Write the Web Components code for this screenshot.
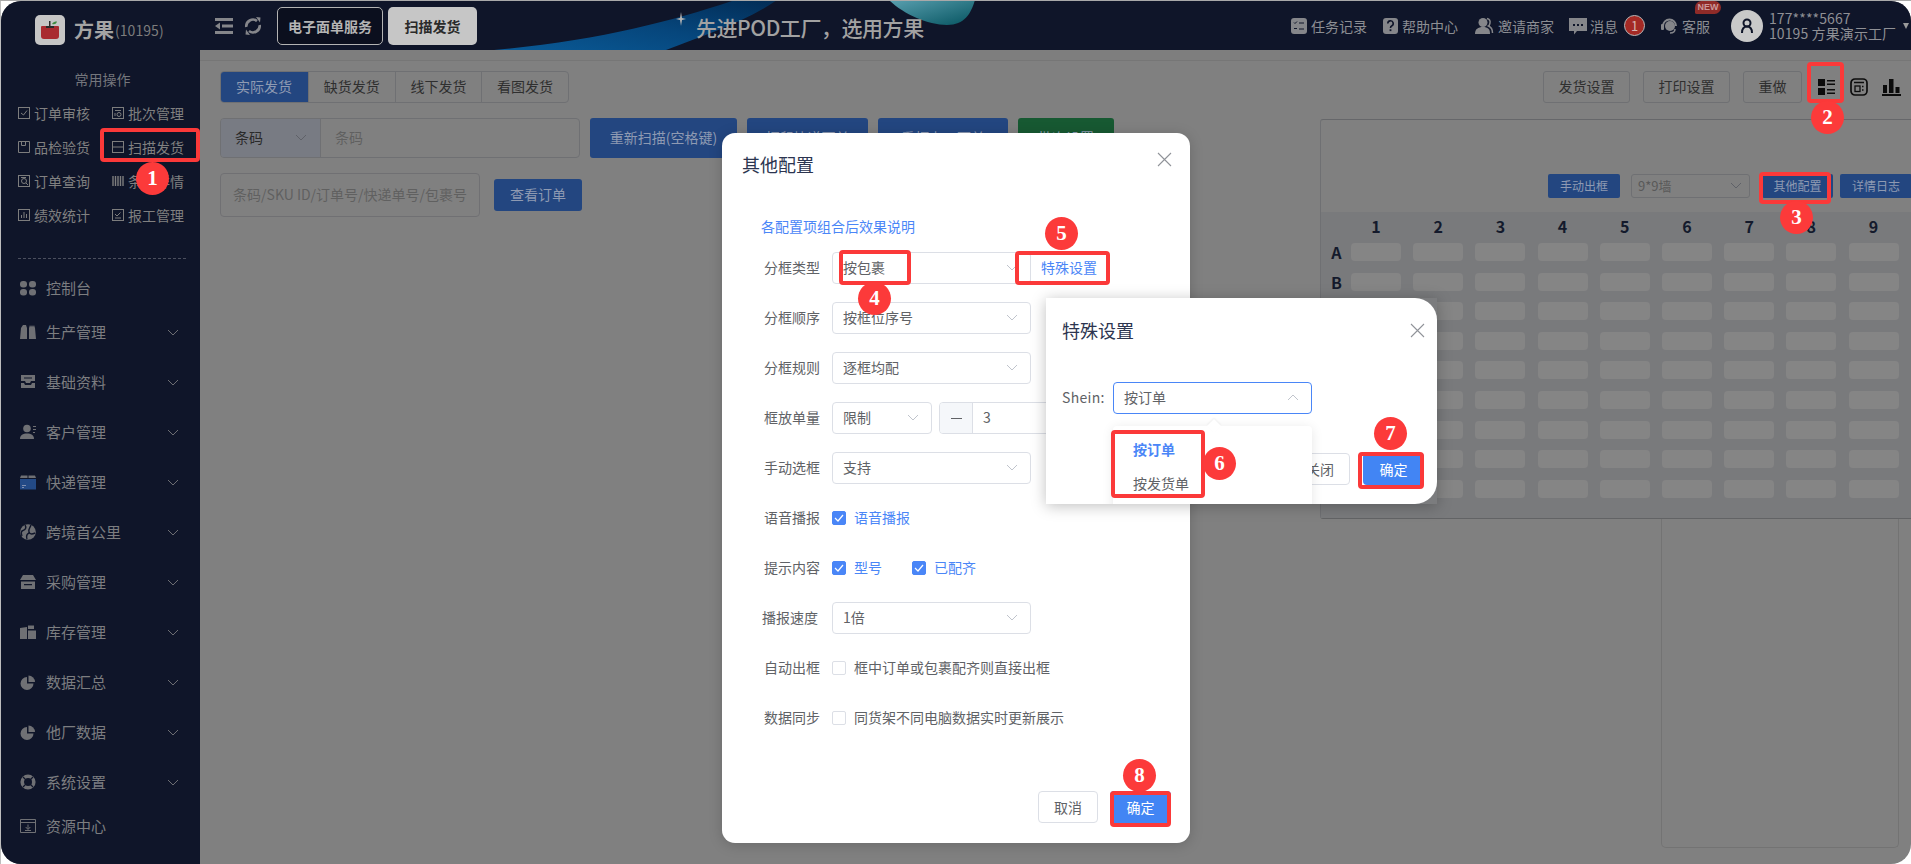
<!DOCTYPE html>
<html lang="zh"><head><meta charset="utf-8"><title>方果</title>
<style>
html,body{margin:0;padding:0;width:1911px;height:864px;overflow:hidden;background:#fff}
body{position:relative;font:14px "Noto Sans CJK SC","Noto Sans",sans-serif}
</style></head><body>
<app-shell>
  <side-bar></side-bar>
  <top-bar></top-bar>
  <ship-page></ship-page>
</app-shell>
<config-dialog></config-dialog>
<special-dialog></special-dialog>
<mark-box style="left:100px;top:128px;width:100px;height:34px"></mark-box>
<mark-box style="left:1807px;top:62px;width:37px;height:41px"></mark-box>
<mark-box style="left:1759px;top:172px;width:72px;height:32px"></mark-box>
<mark-box style="left:839px;top:250px;width:72px;height:35px"></mark-box>
<mark-box style="left:1015px;top:251px;width:95px;height:34px"></mark-box>
<mark-box style="left:1111px;top:430px;width:94px;height:68px"></mark-box>
<mark-box style="left:1358px;top:452px;width:66px;height:37px"></mark-box>
<mark-box style="left:1110px;top:791px;width:61px;height:36px"></mark-box>
<step-dot style="left:136px;top:162px">1</step-dot>
<step-dot style="left:1811px;top:101px">2</step-dot>
<step-dot style="left:1780px;top:201px">3</step-dot>
<step-dot style="left:858px;top:282px">4</step-dot>
<step-dot style="left:1045px;top:217px">5</step-dot>
<step-dot style="left:1203px;top:447px">6</step-dot>
<step-dot style="left:1374px;top:417px">7</step-dot>
<step-dot style="left:1123px;top:759px">8</step-dot>
<script>
const svg=(w,h,vb,body,extra='')=>`<svg width="${w}" height="${h}" viewBox="${vb}" ${extra} style="display:block;flex:none">${body}</svg>`;
const chev=(c='#c0c4cc',up=false)=>svg(12,7,'0 0 12 7',`<path d="${up?'M1 6l5-5 5 5':'M1 1l5 5 5-5'}" fill="none" stroke="${c}" stroke-width="1"/>`);
const BG='#0f1529';
const navIcons={
 dash:'<rect x="0" y="1" width="7" height="6.5" rx="3"/><rect x="9" y="1" width="7" height="6.5" rx="3"/><rect x="0" y="9" width="7" height="6.5" rx="3"/><rect x="9" y="9" width="7" height="6.5" rx="3"/>',
 prod:'<path d="M0 15l1-11 2-3h3l1 3v11zM9 15V4l1-3 1 2 1-2 1 2 1-2 1 3 1 11z"/>',
 tray:'<path d="M1 1h14v6h-4l-1 2H6L5 7H1zM4 3.500v1h8v-1z" fill-rule="evenodd"/><path d="M1 9h3l1 2h6l1-2h3v5H1z"/>',
 user:'<circle cx="7" cy="4.500" r="3.800"/><path d="M0 15c0-4 3-5.500 7-5.500s7 1.500 7 5.500z"/><path d="M13 2h3v1h-3zM13 5h3v1h-3zM13 8h2v1h-2z"/>',
 exp:'<path d="M1 1.500h6.500V4H0zM8.500 1.500H15l1 2.500H8.500z"/><rect y="5" width="16" height="10.500" fill="#234a86"/><path d="M2 11h4v1H2zM2 13h2v1H2z" fill="#7f8fb0"/>',
 globe:`<circle cx="8" cy="8" r="7.800"/><path d="M5 1c2 3 0 5-2 5.500S1 9 2 12M11 1c-1 3-3 4-2 7s4 2 6 1M7 15c-1-3 0-5 2-6" fill="none" stroke="${BG}" stroke-width="1.400"/>`,
 shop:'<path d="M3 1h10l3 5H0z"/><path d="M1 7.500h14V15H1zM4 10v1.200h8V10z" fill-rule="evenodd"/>',
 stock:'<path d="M0 4l7-1v12H0zM8 1.500h6V5H8zM8 6.500h8V15H8z"/>',
 pie:'<path d="M7 3a6.500 6.500 0 1 0 6.500 6.500H7z"/><path d="M8.500 1.500A6.500 6.500 0 0 1 15 8H8.500z"/>',
 buoy:`<circle cx="8" cy="8" r="5.800" fill="none" stroke="currentColor" stroke-width="3.600"/><path d="M3 3l3 3M13 3l-3 3M3 13l3-3M13 13l-3-3" stroke="${BG}" stroke-width="1.200"/>`,
 res:'<path d="M.5 1.500h15v13H.5zM.5 4.500h15" fill="none" stroke="currentColor"/><path d="M8 6.500v4.500M5.700 9L8 11.500 10.300 9M5 12.500h6" fill="none" stroke="currentColor"/>'
};
const opIcons={
 check:'<rect x=".5" y=".5" width="11" height="11"/><path d="M3 6l2.500 2L9 3.500"/>',
 batch:'<rect x=".5" y=".5" width="11" height="11"/><circle cx="7" cy="7.500" r="2"/><path d="M3 3.500h6M3 6v3"/>',
 book:'<path d="M.5.500h11v11H.5zM3.500.500v4h4v-4"/>',
 scan:'<rect x=".5" y=".5" width="11" height="11"/><path d="M.5 6h11"/>',
 search:'<rect x=".5" y=".5" width="11" height="11"/><circle cx="6" cy="6" r="2.500"/><path d="M8 8l2 2M3 2.500h5"/>',
 bars:'<path d="M1 1v10M3.500 1v10M6 1v10M8.500 1v10M11 1v10" stroke-width="1.400"/>',
 chart:'<rect x=".5" y=".5" width="11" height="11"/><path d="M3.500 9V6M6 9V3M8.500 9V5"/>',
 report:'<rect x=".5" y=".5" width="11" height="11"/><path d="M3 5l2 2 3.500-3.500M3 9h6"/>'
};
function define(tag,css,html){
  customElements.define(tag,class extends HTMLElement{
    constructor(){super();const r=this.attachShadow({mode:'open'});
      const h=typeof html==='function'?html(this):html;
      r.innerHTML=`<style>${css}</style>${h}`;}
  });
}
define('step-dot',`:host{position:absolute;z-index:30;display:flex;width:33px;height:33px;border-radius:50%;background:#fc3a3a;color:#fff;align-items:center;justify-content:center;font:700 21px/1 "Liberation Serif",serif}`,`<slot></slot>`);
define('mark-box',`:host{position:absolute;z-index:29;display:block;box-sizing:border-box;border:4px solid #fb3939;border-radius:4px;pointer-events:none}`,``);
define('app-shell',`:host{display:block;box-sizing:border-box;width:1911px;height:864px;padding:1px 0 0 1px;background:#fff;box-shadow:inset 0 1px 0 #a9a9a9,inset 1px 0 0 #bdbdbd}
 .win{width:1910px;height:863px;border-radius:20px;overflow:hidden;background:#808080;display:grid;grid-template-columns:199px 1fr;grid-template-rows:49px 1fr}
 ::slotted(side-bar){grid-row:1/3}`,`<div class="win"><slot></slot></div>`);
define('nav-item',`:host{display:flex;align-items:center;height:50px;padding-left:19px;color:#6f7074;font-size:15px;line-height:20px}
 .t{margin-left:10px;flex:1;color:#7c7d80}.c{margin-right:21px}`,
 el=>`${svg(16,16,'0 0 16 16',navIcons[el.getAttribute('icon')],'fill="currentColor"')}<span class="t"><slot></slot></span>${el.hasAttribute('arrow')?`<span class="c">${chev('#6d6e73')}</span>`:''}`);
define('quick-op',`:host{display:flex;align-items:center;height:34px;color:#808080;font-size:14px;line-height:20px;gap:4px}`,
 el=>`${svg(12,12,'0 0 12 12',opIcons[el.getAttribute('icon')],'fill="none" stroke="#7d7d7d" stroke-width="1"')}<slot></slot>`);
define('side-bar',`:host{display:block;background:${BG};color:#808080;min-height:0}
 .logo{display:flex;align-items:center;height:30px;margin:14px 0 0 34px}
 .ap{width:30px;height:30px;border-radius:5px;background:#c6c6c6;display:flex;align-items:center;justify-content:center}
 .nm{font-size:20px;font-weight:700;color:#a4a4a4;margin-left:9px;line-height:30px}
 .id{font-size:14px;color:#7c7c7c;line-height:30px;margin-left:1px;letter-spacing:.05px}
 .ttl{text-align:center;width:203px;line-height:20px;margin-top:24px;color:#74767c;font-size:14px}
 .ops{display:grid;grid-template-columns:94px 94px;padding-left:17px;margin-top:7px}
 .dash{border-top:1px dashed #4b4f5e;margin:26px 14px 0 17px}
 .n0{height:39px;margin-top:9px}.n1{height:38px}`,
 `<div class="logo"><div class="ap">${svg(20,18,'0 0 20 18','<path d="M2 5h16a1 1 0 0 1 1 1v9a3 3 0 0 1-3 3H4a3 3 0 0 1-3-3V6a1 1 0 0 1 1-1z" fill="#a92a30"/><path d="M9 0h1.500v6H9z" fill="#2a2a2a"/><path d="M6 5h8v2H6z" fill="#2a2a2a"/><path d="M12 3c1-2 3-2.500 5-2.500-.5 2-2 3.500-5 2.500z" fill="#3f8a3f"/>')}</div><span class="nm">方果</span><span class="id">(10195)</span></div>
 <div class="ttl">常用操作</div>
 <div class="ops">
  <quick-op icon="check">订单审核</quick-op><quick-op icon="batch">批次管理</quick-op>
  <quick-op icon="book">品检验货</quick-op><quick-op icon="scan">扫描发货</quick-op>
  <quick-op icon="search">订单查询</quick-op><quick-op icon="bars">条码详情</quick-op>
  <quick-op icon="chart">绩效统计</quick-op><quick-op icon="report">报工管理</quick-op>
 </div>
 <div class="dash"></div>
 <nav-item class="n0" icon="dash">控制台</nav-item>
 <nav-item icon="prod" arrow>生产管理</nav-item>
 <nav-item icon="tray" arrow>基础资料</nav-item>
 <nav-item icon="user" arrow>客户管理</nav-item>
 <nav-item icon="exp" arrow>快递管理</nav-item>
 <nav-item icon="globe" arrow>跨境首公里</nav-item>
 <nav-item icon="shop" arrow>采购管理</nav-item>
 <nav-item icon="stock" arrow>库存管理</nav-item>
 <nav-item icon="pie" arrow>数据汇总</nav-item>
 <nav-item icon="pie" arrow>他厂数据</nav-item>
 <nav-item icon="buoy" arrow>系统设置</nav-item>
 <nav-item class="n1" icon="res">资源中心</nav-item>`);
const HI='#85868a';
define('top-link',`:host{display:flex;align-items:center;color:#8c8e93;font-size:14px;line-height:20px;gap:4px}`,`<slot name="i"></slot><slot></slot>`);
define('top-bar',`:host{display:flex;align-items:center;background:${BG};height:49px;color:#8c8e93;position:relative;font-size:14px;min-width:0}
 .ic{margin-left:15px}.rf{margin-left:11px}
 .b1,.b2{box-sizing:border-box;height:38px;display:flex;align-items:center;justify-content:center;font-weight:700;border-radius:5px;font-size:14px}
 .b1{width:106px;margin-left:15px;background:#0b0f1e;border:1px solid #b3b3b3;color:#b4b4b4}
 .b2{width:89px;margin-left:5px;background:#c6c6c6;color:#2a2a2a}
 .ban{flex:1;align-self:stretch;position:relative;display:flex;align-items:center;padding-left:199px;min-width:0}
 .ban svg.bg{position:absolute;left:0;top:0}
 .ban b{position:relative;font-size:21px;font-weight:500;color:#a2a2a2;line-height:26px;margin:2px 0 0 10px;white-space:nowrap;letter-spacing:-.45px}
 .ban .st{position:relative;margin-top:-14px}
 .r{display:flex;align-items:center;padding-right:2px;height:100%}
 top-link{margin-left:16px}
 .badge{box-sizing:border-box;width:21px;height:21px;border-radius:50%;background:#a42a25;border:1px solid #b9b9b9;color:#d7b3b0;font-size:13px;display:flex;align-items:center;justify-content:center;margin-left:3px}
 .kf{position:relative}
 .new{position:absolute;left:34px;top:-15px;width:26px;height:13px;border-radius:7px 7px 7px 2px;background:#8f2b28;color:#c99;font:700 9px/13px "Liberation Sans",sans-serif;text-align:center}
 .av{width:32px;height:32px;border-radius:50%;background:#c9c9c9;margin-left:21px;display:flex;align-items:center;justify-content:center}
 .u{margin-left:6px;width:134px;line-height:15px;color:#8f9095;font-size:14px;white-space:nowrap;margin-top:1px;letter-spacing:.1px}
 .tri{width:0;height:0;border:3.500px solid transparent;border-top:6px solid #9a9a9a;border-bottom:0}`,
 `<span class="ic">${svg(18,16,'0 0 18 16',`<path d="M0 0h18v3H0zM7 6.500h11v3H7zM0 13h18v3H0z" fill="${HI}"/><path d="M5 4.500L0 8l5 3.500z" fill="${HI}"/>`)}</span>
 <span class="rf">${svg(18,18,'0 0 18 18',`<path d="M2.300 10a6.700 6.700 0 0 1 10.700-6M15.700 8A6.700 6.700 0 0 1 5 14" fill="none" stroke="${HI}" stroke-width="2.600"/><path d="M12 0l4.500.5-.5 5zM6 18l-4.500-.5.5-5z" fill="${HI}"/>`)}</span>
 <div class="b1">电子面单服务</div><div class="b2">扫描发货</div>
 <div class="ban">
  ${svg(815,49,'0 0 815 49','<defs><linearGradient id="g" x1="0" y1="1" x2="1" y2="0"><stop offset="0" stop-color="#0a5a96"/><stop offset=".5" stop-color="#06467c"/><stop offset="1" stop-color="#022c55"/></linearGradient><linearGradient id="t" x1="0" y1="0" x2="1" y2="1"><stop offset="0" stop-color="#5aa0b0"/><stop offset="1" stop-color="#065460"/></linearGradient></defs><path d="M17 49C120 40 195 20 258 -1H300C270 20 225 35 189 49z" fill="url(#g)"/><path d="M412 -1H498C494 12 488 24 470 24C450 24 425 12 412 -1z" fill="url(#t)"/>','class="bg"')}
  <span class="st">${svg(10,14,'0 0 10 14','<path d="M5 0l1 6 4 1-4 1-1 6-1-6-4-1 4-1z" fill="#b5b5b5"/>')}</span>
  <b>先进POD工厂，选用方果</b>
 </div>
 <div class="r">
  <top-link><span slot="i">${svg(16,18,'0 0 16 18',`<rect y="1" width="16" height="16" rx="3" fill="${HI}"/><path d="M3 5.500l1 1 2-2M8 6h5M3 11.500h3M8 12h5" stroke="${BG}" fill="none"/>`)}</span>任务记录</top-link>
  <top-link><span slot="i">${svg(15,18,'0 0 15 18',`<rect y="1" width="15" height="16" rx="3" fill="${HI}"/><path d="M4.800 6.500a2.700 2.700 0 1 1 3.800 2.500c-1 .5-1.100 1-1.100 2" stroke="${BG}" stroke-width="1.600" fill="none"/><rect x="6.600" y="12.300" width="1.800" height="1.800" fill="${BG}"/>`)}</span>帮助中心</top-link>
  <top-link><span slot="i">${svg(20,18,'0 0 20 18',`<circle cx="9" cy="5.500" r="4.500" fill="${HI}"/><path d="M1 17c0-5 3-7 8-7s7 2 7 7z" fill="${HI}"/><path d="M13 1.500c2 .5 3.500 2 3 4.500s-1.500 3-1.500 3c2.500 1 4 4 4 7" fill="none" stroke="${HI}" stroke-width="1.500"/>`)}</span>邀请商家</top-link>
  <top-link style="margin-left:15px;gap:3px"><span slot="i">${svg(18,18,'0 0 18 18',`<path d="M0 1h18v13H8l-3 3.500V14H0z" fill="${HI}"/><path d="M4 7h2v2H4zM8 7h2v2H8zM12 7h2v2h-2z" fill="${BG}"/>`)}</span>消息<span class="badge">1</span></top-link>
  <top-link class="kf" style="margin-left:16px"><span slot="i">${svg(17,18,'0 0 17 18',`<path d="M2 9a6.500 6.500 0 0 1 13 0" fill="none" stroke="${HI}" stroke-width="2"/><circle cx="9" cy="9" r="5" fill="${HI}"/><rect y="7" width="3" height="6" rx="1" fill="${HI}"/><path d="M14 12c0 3-2 4-5 4" fill="none" stroke="${HI}" stroke-width="1.500"/>`)}</span>客服<span class="new">NEW</span></top-link>
  <div class="av">${svg(14,16,'0 0 14 16',`<circle cx="7" cy="5" r="3.500" fill="none" stroke="${BG}" stroke-width="2"/><path d="M2 15c0-4 2-6.500 5-6.500s5 2.500 5 6.500" fill="none" stroke="${BG}" stroke-width="2"/>`)}</div>
  <div class="u">177****5667<br>10195 方果演示工厂</div>
  <span class="tri"></span>
 </div>`);
define('dim-btn',`:host{display:inline-flex;box-sizing:border-box;height:32px;align-items:center;justify-content:center;background:#234680;color:#8e9ab2;border-radius:3px;font-size:14px;white-space:nowrap;flex:none;padding-bottom:2px}
 :host([plain]){background:transparent;border:1px solid #6f7073;color:#2f2f2f}
 :host([green]){background:#175932}
 :host([sm]){height:24px;font-size:12px;border-radius:2px}`,`<slot></slot>`);
define('slot-grid',`:host{display:grid;grid-template-columns:30px repeat(9,62.2px);grid-auto-rows:29.6px;grid-template-rows:31px;background:#797a7c;height:306px;overflow:hidden;color:#141a2c;font-weight:700;font-size:16px;line-height:18px}
 .h{width:50px;text-align:center;align-self:end;padding-bottom:8px}
 .l{text-align:center;height:18px;margin-left:1px}
 .c{width:50px;height:18px;border-radius:4px;background:#858585}`,
 ()=>{let s='<span></span>';for(let i=1;i<=9;i++)s+=`<span class="h">${i}</span>`;
  for(const r of 'ABCDEFGHI'){s+=`<span class="l">${r<'C'?r:''}</span>`;for(let i=0;i<9;i++)s+='<span class="c"></span>';}return s;});
define('ship-page',`:host{display:block;min-height:0;overflow:hidden;font-size:14px;color:#303030}
 .strip{height:10px;background:#7e7e7e;border-bottom:1px solid #767676}
 .top{display:flex;align-items:center;height:32px;margin-top:10px;padding:0 10px 0 20px}
 .seg{display:flex;border:1px solid #6f7073;border-radius:4px;box-sizing:border-box;height:32px;overflow:hidden}
 .seg span{display:flex;align-items:center;justify-content:center;box-sizing:border-box;width:86.6px;border-left:1px solid #6f7073;color:#2f2f2f;padding-bottom:2px}
 .seg span:first-child{width:88px;background:#234680;color:#8e9ab2;border:0;margin:-1px 0 -1px -1px}
 .acts{margin-left:auto;display:flex;align-items:center}
 .acts dim-btn{margin-right:13px}
 .main{display:flex;margin-top:15px}
 .left{width:1120px;padding-left:20px;box-sizing:border-box;flex:none}
 .r1,.r2{display:flex;align-items:flex-start}
 .grp{display:flex;width:360px;height:40px;box-sizing:border-box;border:1px solid #6f7073;border-radius:4px;overflow:hidden;align-items:stretch}
 .sel{width:100px;background:#787b83;border-right:1px solid #6f7073;display:flex;align-items:center;justify-content:space-between;padding:0 13px 2px 14px;box-sizing:border-box;color:#2a2a2a}
 .ph{color:#606060;display:flex;align-items:center;padding:0 0 2px 14px}
 .r1 dim-btn{height:40px;margin-left:10px}
 .r2{margin-top:15px;align-items:center}
 .srch{box-sizing:border-box;width:260px;height:44px;border:1px solid #707073;border-radius:4px;color:#606060;display:flex;align-items:center;justify-content:center;white-space:nowrap;padding-bottom:2px}
 .right{width:591px;flex:none;margin-top:1px}
 .panel{box-sizing:border-box;height:400px;border-top:1px solid #66676a;border-left:1px solid #6f7073;border-bottom:1px solid #626365;border-radius:3px 0 0 3px;width:600px;background:#808080}
 .tb{display:flex;align-items:flex-start;height:92px;padding:54px 0 0 227px;box-sizing:border-box}
 .dd{box-sizing:border-box;width:119px;height:24px;border:1px solid #6f7073;border-radius:3px;margin:0 12px 0 11px;padding:0 7px 2px 6px;display:flex;align-items:center;justify-content:space-between;color:#595959;font-size:13px}
 .low{box-sizing:border-box;margin-left:341px;width:238px;height:329px;border:1px solid #737373;border-top:0;border-radius:0 0 5px 5px}`,
 `<div class="strip"></div>
 <div class="top">
  <div class="seg"><span>实际发货</span><span>缺货发货</span><span>线下发货</span><span>看图发货</span></div>
  <div class="acts">
   <dim-btn plain style="width:87px">发货设置</dim-btn><dim-btn plain style="width:87px">打印设置</dim-btn><dim-btn plain style="width:59px;margin-right:16px">重做</dim-btn>
   ${svg(17,16,'0 0 17 16','<path d="M0 0h7v7H0zM0 9h7v7H0zM9 1h8v1.500H9zM9 4.500h8V6H9zM9 10h8v1.500H9zM9 13.500h8V15H9z" fill="#0c0c0c"/>')}
   <span style="width:15px"></span>
   ${svg(18,18,'0 0 18 18','<rect x="1" y="1" width="16" height="16" rx="4" fill="none" stroke="#0c0c0c" stroke-width="1.700"/><path d="M4 4.500h10" stroke="#0c0c0c" stroke-width="1.500"/><rect x="5" y="8" width="5" height="5.500" fill="none" stroke="#0c0c0c" stroke-width="1.300"/><path d="M12 8.500h1.500M12 12h1.500" stroke="#0c0c0c" stroke-width="1.500"/>')}
   <span style="width:14px"></span>
   ${svg(19,17,'0 0 19 17','<path d="M7 0h4.500v14H7zM1 6h4v8H1zM13.500 8h4v6h-4zM0 15h19v2H0z" fill="#0c0c0c"/>')}
  </div>
 </div>
 <div class="main">
  <div class="left">
   <div class="r1">
    <div class="grp"><div class="sel">条码${chev('#5f6168')}</div><div class="ph">条码</div></div>
    <dim-btn style="width:147px">重新扫描(空格键)</dim-btn>
    <dim-btn style="width:121px">打印快递面单</dim-btn>
    <dim-btn style="width:130px">重打上一面单</dim-btn>
    <dim-btn green style="width:96px">批次设置</dim-btn>
   </div>
   <div class="r2"><div class="srch">条码/SKU ID/订单号/快递单号/包裹号</div><dim-btn style="width:88px;margin-left:14px">查看订单</dim-btn></div>
  </div>
  <div class="right">
   <div class="panel">
    <div class="tb"><dim-btn sm style="width:72px">手动出框</dim-btn><div class="dd">9*9墙${chev('#5f6168')}</div><dim-btn sm style="width:71px;margin-right:7px">其他配置</dim-btn><dim-btn sm style="width:72px">详情日志</dim-btn></div>
    <slot-grid></slot-grid>
   </div>
   <div class="low"></div>
  </div>
 </div>`);
define('el-select',`:host{display:flex;box-sizing:border-box;width:199px;height:32px;flex:none;border:1px solid #dcdfe6;border-radius:4px;background:#fff;align-items:center;justify-content:space-between;padding:0 12px 2px 10px;color:#606266;font-size:14px;line-height:20px}
 :host([open]){border-color:#4a86f7}`,el=>`<slot></slot>${chev('#c0c4cc',el.hasAttribute('open'))}`);
define('el-check',`:host{display:inline-flex;align-items:center;color:#606266;font-size:14px;line-height:20px;white-space:nowrap}
 :host([on]){color:#4a86f7}
 .t{padding-bottom:2px}
 .b{box-sizing:border-box;width:14px;height:14px;border:1px solid #dcdfe6;border-radius:2px;margin-right:8px;background:#fff;display:flex;align-items:center;justify-content:center}
 :host([on]) .b{background:#4a86f7;border-color:#4a86f7}`,
 el=>`<span class="b">${el.hasAttribute('on')?svg(10,8,'0 0 10 8','<path d="M1 4l3 3 5-6" fill="none" stroke="#fff" stroke-width="1.200"/>'):''}</span><span class="t"><slot></slot></span>`);
define('form-row',`:host{display:flex;align-items:center;height:32px;padding-left:42px;font-size:14px}
 .lb{width:56px;margin-right:12px;color:#606266;line-height:20px;white-space:nowrap;flex:none;padding-bottom:2px}
 :host([shift]) .lb{transform:translateX(-2px)}`,el=>`<span class="lb">${el.getAttribute('label')}</span><slot></slot>`);
const X=svg(15,15,'0 0 15 15','<path d="M1 1l13 13M14 1L1 14" stroke="#909399" stroke-width="1.100" fill="none"/>');
define('ok-btn',`:host{display:flex;box-sizing:border-box;height:32px;width:61px;align-items:center;justify-content:center;border-radius:4px;background:#4285f4;color:#fff;font-size:14px;flex:none}
 :host([ghost]){background:#fff;border:1px solid #dcdfe6;color:#606266;width:60px}`,`<slot></slot>`);
define('config-dialog',`:host{position:absolute;z-index:10;left:722px;top:133px;width:468px;height:710px;background:#fff;border-radius:13px;display:flex;flex-direction:column;box-shadow:0 2px 14px rgba(0,0,0,.18);font-size:14px;color:#606266;box-sizing:border-box}
 .hd{display:flex;align-items:center;justify-content:space-between;height:64px;padding:0 18px 2px 20px;flex:none;box-sizing:border-box}
 .hd b{font-weight:400;font-size:18px;color:#2c3550;line-height:24px}
 .hd span{margin-top:-10px}
 .lk{color:#4a86f7;line-height:20px;margin:19px 0 16px 39px}
 .form{display:flex;flex-direction:column;gap:18px}
 .sp{display:flex;align-items:center;box-sizing:border-box;height:32px;color:#4a86f7;padding:0 0 2px 10px;border-left:1px solid #dcdfe6;margin-left:-1px}
 .num{display:flex;box-sizing:border-box;height:32px;width:120px;margin-left:7px;border:1px solid #dcdfe6;border-radius:4px;overflow:hidden;align-items:center}
 .num i{width:32px;height:100%;background:#f5f7fa;border-right:1px solid #dcdfe6;display:flex;align-items:center;justify-content:center;font-style:normal;flex:none}
 .num span{margin-left:10px;padding-bottom:2px}
 .ft{margin-top:auto;display:flex;justify-content:flex-end;gap:12px;padding:0 19px 20px 0}`,
 `<div class="hd"><b>其他配置</b><span>${X}</span></div>
 <div class="lk">各配置项组合后效果说明</div>
 <div class="form">
  <form-row label="分框类型"><el-select>按包裹</el-select><span class="sp">特殊设置</span></form-row>
  <form-row label="分框顺序"><el-select>按框位序号</el-select></form-row>
  <form-row label="分框规则"><el-select>逐框均配</el-select></form-row>
  <form-row label="框放单量"><el-select style="width:100px">限制</el-select><div class="num"><i>${svg(11,1,'0 0 11 1','<path d="M0 0h11v1H0z" fill="#606266"/>')}</i><span>3</span></div></form-row>
  <form-row label="手动选框"><el-select>支持</el-select></form-row>
  <form-row label="语音播报"><el-check on>语音播报</el-check></form-row>
  <form-row label="提示内容"><el-check on>型号</el-check><el-check on style="margin-left:30px">已配齐</el-check></form-row>
  <form-row label="播报速度" shift><el-select>1倍</el-select></form-row>
  <form-row label="自动出框"><el-check>框中订单或包裹配齐则直接出框</el-check></form-row>
  <form-row label="数据同步"><el-check>同货架不同电脑数据实时更新展示</el-check></form-row>
 </div>
 <div class="ft"><ok-btn ghost>取消</ok-btn><ok-btn>确定</ok-btn></div>`);
define('special-dialog',`:host{position:absolute;z-index:20;left:1046px;top:298px;width:391px;height:206px;background:#7b7c7e;box-shadow:0 2px 14px rgba(0,0,0,.25);font-size:14px;color:#606266}
 .in{position:relative;height:100%;background:#fff;border-radius:0 22px 22px 0;overflow:hidden;display:flex;flex-direction:column;box-sizing:border-box}
 .hd{display:flex;justify-content:space-between;align-items:center;height:66px;padding:0 12px 2px 16px;flex:none;box-sizing:border-box}
 .hd b{font-weight:400;font-size:18px;color:#2c3550;line-height:24px}
 .row{display:flex;align-items:center;padding-left:16px;margin-top:18px}
 .row label{width:51px;line-height:20px;letter-spacing:.3px;padding-bottom:2px}
 .ft{position:absolute;right:13px;top:155px;display:flex;gap:13px}
 .pop{position:absolute;left:67px;top:128px;width:199px;height:90px;background:#fff;border-radius:4px;box-shadow:0 2px 12px rgba(0,0,0,.1);z-index:2;padding-top:6px;box-sizing:border-box}
 .pop::before{content:"";position:absolute;left:96px;top:-5px;width:10px;height:10px;background:#fff;transform:rotate(45deg);box-shadow:-1px -1px 2px rgba(0,0,0,.05)}
 .pop div{height:34px;line-height:34px;padding-left:20px;position:relative}
 .pop .a{color:#4a86f7;font-weight:700}`,
 `<div class="in"><div class="hd"><b>特殊设置</b><span>${X}</span></div>
 <div class="row"><label>Shein:</label><el-select open>按订单</el-select></div>
 <div class="pop"><div class="a">按订单</div><div>按发货单</div></div>
 <div class="ft"><ok-btn ghost>关闭</ok-btn><ok-btn style="width:61px">确定</ok-btn></div></div>`);
</script>
</body></html>
